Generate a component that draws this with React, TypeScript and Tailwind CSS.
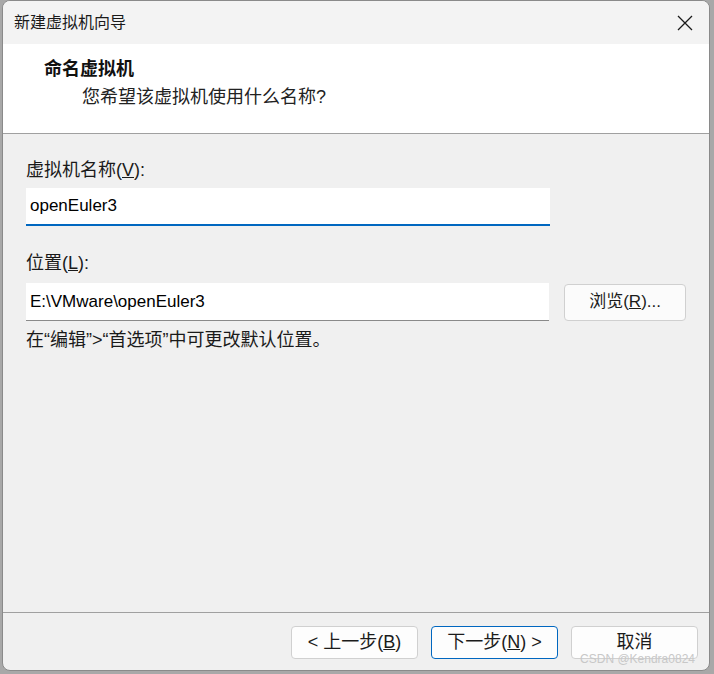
import React, { useState } from 'react';

const font = { fontFamily: '"Liberation Sans", "Noto Sans CJK SC", sans-serif' };

const App: React.FC = () => {
  const [name, setName] = useState('openEuler3');
  const [location, setLocation] = useState('E:\\VMware\\openEuler3');

  const btn =
    "h-[33px] w-[127px] rounded-[4px] border bg-[#fdfdfd] text-[18px] text-[#1b1b1b] flex items-center justify-center";

  return (
    <div className="w-[714px] h-[674px] bg-[#a8a8a8] overflow-hidden" style={font}>
      <div className="relative ml-[2px] w-[708px] h-[671px] rounded-[8px] bg-[#f0f0f0] border border-[#8a8a8a] flex flex-col overflow-hidden">
        {/* title bar */}
        <div className="h-[43px] bg-[#f3f3f3] flex items-center justify-between pl-[11px] pr-[14px]">
          <span className="text-[16px] text-[#1a1a1a]">新建虚拟机向导</span>
          <svg width="18" height="18" viewBox="0 0 18 18" className="mr-[1px]">
            <path d="M2 2 L16 16 M16 2 L2 16" stroke="#1a1a1a" strokeWidth="1.3" fill="none" />
          </svg>
        </div>

        {/* header */}
        <div className="h-[90px] bg-white border-b border-[#a0a0a0] pl-[41px] pt-[12px]">
          <div className="text-[18px] font-bold text-[#111] leading-[26px]">命名虚拟机</div>
          <div className="text-[18px] text-[#222] leading-[26px] pl-[38px] mt-[2px]">您希望该虚拟机使用什么名称?</div>
        </div>

        {/* body */}
        <div className="flex-1 px-[23px] pt-[23px]">
          <label className="block text-[18px] text-[#1a1a1a] leading-[26px]">
            虚拟机名称(<span className="underline">V</span>):
          </label>
          <input
            value={name}
            onChange={(e) => setName(e.target.value)}
            className="mt-[5px] block w-[524px] h-[38px] bg-white border-b-2 border-[#0067c0] pl-[4px] text-[17px] text-black outline-none"
          />

          <label className="block mt-[24px] text-[18px] text-[#1a1a1a] leading-[26px]">
            位置(<span className="underline">L</span>):
          </label>
          <div className="mt-[7px] flex items-center gap-[15px]">
            <input
              value={location}
              onChange={(e) => setLocation(e.target.value)}
              className="block w-[524px] h-[38px] bg-white border-b border-[#8a8a8a] pl-[4px] text-[17px] text-black outline-none"
            />
            <button className="h-[37px] w-[122px] rounded-[4px] border border-[#d0d0d0] bg-[#fbfbfb] text-[17px] text-[#1b1b1b]">
              浏览(<span className="underline">R</span>)...
            </button>
          </div>
          <p className="mt-[6px] text-[18px] text-[#1a1a1a] leading-[26px]">在“编辑”&gt;“首选项”中可更改默认位置。</p>
        </div>

        {/* footer */}
        <div className="h-[58px] border-t border-[#a0a0a0] flex items-start justify-end gap-[13px] pt-[13px] pr-[11px]">
          <button className={`${btn} border-[#d0d0d0]`}>
            &lt; 上一步(<span className="underline">B</span>)
          </button>
          <button className={`${btn} border-[#0067c0]`}>
            下一步(<span className="underline">N</span>) &gt;
          </button>
          <button className={`${btn} border-[#d0d0d0]`}>取消</button>
        </div>

        <span className="absolute right-[14px] bottom-[2px] text-[12px] text-[#c8c8c8]">
          CSDN @Kendra0824
        </span>
      </div>
    </div>
  );
};

export default App;
